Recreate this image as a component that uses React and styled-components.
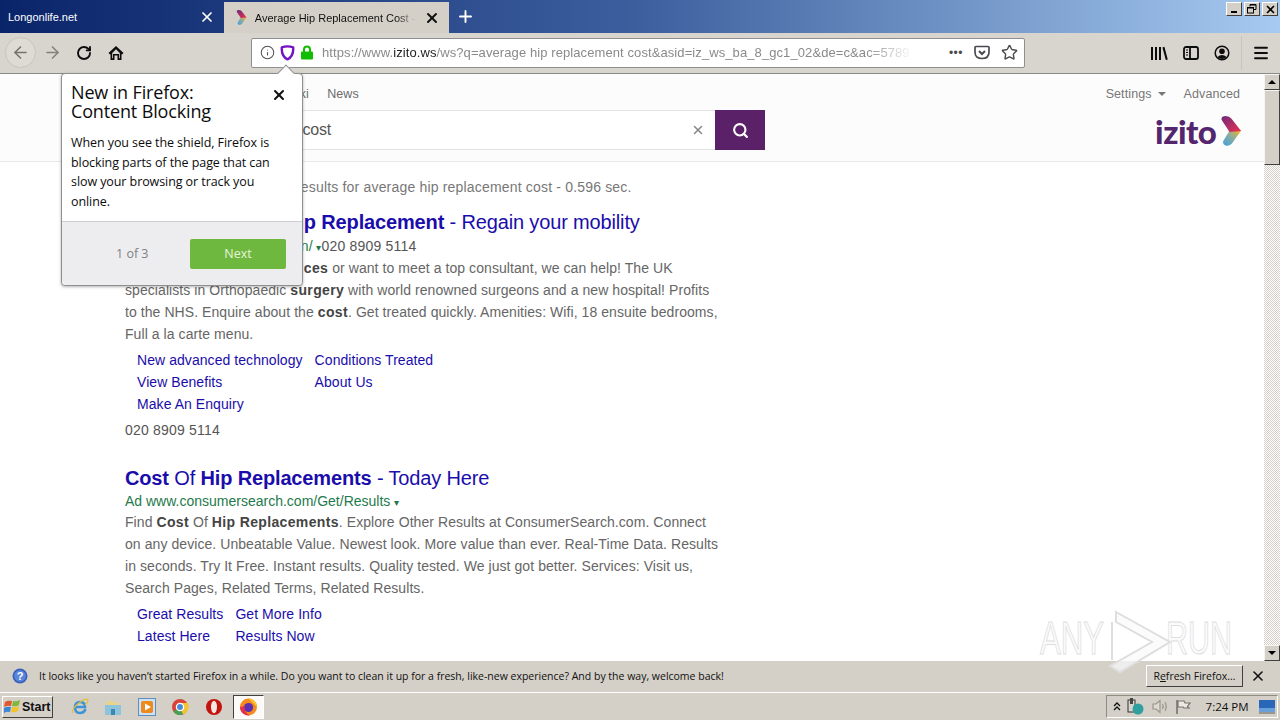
import styled, { createGlobalStyle } from "styled-components";
import { X, Plus, Search, ArrowLeft, ArrowRight, RotateCw, Star, Info, Menu } from "lucide-react";

const GlobalStyle = createGlobalStyle`
  html, body { margin: 0; padding: 0; overflow: hidden; background: #fff; }
  * { box-sizing: border-box; }
`;

const ads = [
  {
    id: 1,
    title: [["Average Cost Of Hi", true], ["p Replacement", true], [" - Regain your mobility", false]],
    url: "Ad www.surreyhospital.com/n/",
    phone: "020 8909 5114",
    lines: [
      [["Best Hip Replacement Prices", true], [" or want to meet a top consultant, we can help! The UK", false]],
      [["specialists in Orthopaedic ", false], ["surgery", true], [" with world renowned surgeons and a new hospital! Profits", false]],
      [["to the NHS. Enquire about the ", false], ["cost", true], [". Get treated quickly. Amenities: Wifi, 18 ensuite bedrooms,", false]],
      [["Full a la carte menu.", false]],
    ],
    links: ["New advanced technology", "Conditions Treated", "View Benefits", "About Us", "Make An Enquiry"],
    footer: "020 8909 5114",
  },
  {
    id: 2,
    tight: true,
    title: [["Cost", true], [" Of ", false], ["Hip Replacements", true], [" - Today Here", false]],
    url: "Ad www.consumersearch.com/Get/Results",
    lines: [
      [["Find ", false], ["Cost", true], [" Of ", false], ["Hip Replacements", true], [". Explore Other Results at ConsumerSearch.com. Connect", false]],
      [["on any device. Unbeatable Value. Newest look. More value than ever. Real-Time Data. Results", false]],
      [["in seconds. Try It Free. Instant results. Quality tested. We just got better. Services: Visit us,", false]],
      [["Search Pages, Related Terms, Related Results.", false]],
    ],
    links: ["Great Results", "Get More Info", "Latest Here", "Results Now"],
  },
];

const ChevronLogo = ({ size = 20, id = "a" }) => (
  <svg width={size * 0.72} height={size} viewBox="0 0 18 25">
    <defs>
      <linearGradient id={id + "t"} x1="0" y1="0" x2="1" y2="1">
        <stop offset="0" stopColor="#6e2a7a" />
        <stop offset="1" stopColor="#ee3050" />
      </linearGradient>
      <linearGradient id={id + "b"} x1="0" y1="1" x2="1" y2="0">
        <stop offset="0" stopColor="#3f9fe0" />
        <stop offset="0.55" stopColor="#8fae9a" />
        <stop offset="1" stopColor="#fbb216" />
      </linearGradient>
    </defs>
    <path d="M8 12 H17.6 L10 23 Q8 25.4 4.6 24.6 Q1.6 23.4 3 20.4 Z" fill={`url(#${id}b)`} />
    <path d="M1.4 3.4 Q.6 .6 3.4 .2 Q7.4 -.4 9.6 2.2 L17.6 12.4 L8 13.4 Z" fill={`url(#${id}t)`} />
  </svg>
);

const App = () => (
  <Screen>
    <GlobalStyle />
    <TitleBar>
      <Tab>
        <span>Longonlife.net</span>
        <X size={16} strokeWidth={2.6} color="#fff" />
      </Tab>
      <ActiveTab>
        <ChevronLogo size={15} id="fav" />
        <ActiveLabel>Average Hip Replacement Cost - Doctors</ActiveLabel>
        <X size={16} strokeWidth={3} color="#111" />
      </ActiveTab>
      <NewTab><Plus size={19} strokeWidth={2.4} color="#fff" /></NewTab>
      <WindowButtons>
        <WinButton>
          <svg width="9" height="9" viewBox="0 0 9 9"><rect x="1" y="6" width="6" height="2" fill="#000" /></svg>
        </WinButton>
        <WinButton>
          <svg width="10" height="10" viewBox="0 0 10 10" fill="none" stroke="#000">
            <path d="M3 2.5V.5h6v5H7" /><rect x=".5" y="3.5" width="6" height="5.5" /><path d="M1 4h5M3 1h6" />
          </svg>
        </WinButton>
        <WinButton>
          <svg width="9" height="9" viewBox="0 0 9 9" stroke="#000" strokeWidth="1.6"><path d="M1 1l7 7M8 1l-7 7" /></svg>
        </WinButton>
      </WindowButtons>
    </TitleBar>

    <NavBar>
      <BackCircle><ArrowLeft size={19} strokeWidth={2} color="#77736c" /></BackCircle>
      <NavIcon><ArrowRight size={19} strokeWidth={2} color="#85817a" /></NavIcon>
      <NavIcon><RotateCw size={16} strokeWidth={2.8} color="#0c0c0d" /></NavIcon>
      <NavIcon>
        <svg width="18" height="18" viewBox="0 0 18 18">
          <path d="M9 2 L1.5 9 L3 10.4 L3.5 10 V16 H7.5 V11.5 H10.5 V16 H14.5 V10 L15 10.4 L16.5 9 Z M5.2 9 L9 5.3 L12.8 9 V14.3 H12 V10 H6 V14.3 H5.2 Z" fill="#0c0c0d" fillRule="evenodd" />
        </svg>
      </NavIcon>
      <UrlBar>
        <Info size={15} strokeWidth={1.7} color="#55524e" />
        <svg width="15" height="16" viewBox="0 0 15 16">
          <path d="M1.8 2.4 Q7.5 .4 13.2 2.4 Q13.8 11 7.5 14.4 Q1.2 11 1.8 2.4 Z" fill="none" stroke="#7512c4" strokeWidth="2.4" strokeLinejoin="round" />
        </svg>
        <svg width="14" height="15" viewBox="0 0 14 15">
          <path d="M4 7V4.6Q4 1.6 7 1.6Q10 1.6 10 4.6V7" fill="none" stroke="#12bc00" strokeWidth="2" />
          <rect x="1" y="6.5" width="12" height="8" rx="1" fill="#12bc00" />
        </svg>
        <UrlText>https://www.<strong>izito.ws</strong>/ws?q=average hip replacement cost&amp;asid=iz_ws_ba_8_gc1_02&amp;de=c&amp;ac=5789</UrlText>
        <UrlActions>
          <MoreDots>•••</MoreDots>
          <svg width="16" height="15" viewBox="0 0 16 15" fill="none" stroke="#4a4a4f" strokeWidth="1.7">
            <path d="M2 1.5H14Q15 1.5 15 2.5V7Q15 13.5 8 13.5Q1 13.5 1 7V2.5Q1 1.5 2 1.5Z" />
            <path d="M5 6l3 3 3-3" strokeWidth="2" />
          </svg>
          <Star size={17} strokeWidth={2} color="#4a4a4f" />
        </UrlActions>
      </UrlBar>
      <RightTools>
        <svg width="18" height="16" viewBox="0 0 18 16" fill="#0c0c0d">
          <rect x="1" y="2" width="2" height="13" /><rect x="5" y="2" width="2" height="13" /><rect x="9" y="2" width="2" height="13" />
          <path d="M12.4 2.4l2-.6 3.4 12.6-2 .6z" />
        </svg>
        <svg width="16" height="14" viewBox="0 0 16 14" fill="none" stroke="#0c0c0d" strokeWidth="1.8">
          <rect x="1" y="1" width="14" height="12" rx="2" />
          <path d="M7 1v12" />
          <path d="M3 4h2M3 6.5h2M3 9h2" strokeWidth="1" />
        </svg>
        <svg width="16" height="16" viewBox="0 0 16 16">
          <circle cx="8" cy="8" r="6.8" fill="none" stroke="#0c0c0d" strokeWidth="1.5" />
          <circle cx="8" cy="6.2" r="2.8" fill="#0c0c0d" />
          <path d="M3.2 12.2Q8 7.6 12.8 12.2Q8 15.6 3.2 12.2Z" fill="#0c0c0d" />
        </svg>
        <ToolDivider />
        <Menu size={18} strokeWidth={2.4} color="#0c0c0d" />
      </RightTools>
    </NavBar>

    <Viewport>
      <Page>
        <Header>
          <HeaderMain>
            <Tabs>
              <TabLink>Web</TabLink>
              <TabLink>Images</TabLink>
              <TabLink>Videos</TabLink>
              <TabLink>Wiki</TabLink>
              <TabLink>News</TabLink>
            </Tabs>
            <SearchRow>
              <SearchField>
                <SearchText>average hip replacement cost</SearchText>
                <X size={14} strokeWidth={2.6} color="#8a8a8a" />
              </SearchField>
              <SearchButton><Search size={17} strokeWidth={3} color="#fff" /></SearchButton>
            </SearchRow>
          </HeaderMain>
          <HeaderSide>
            <SideLinks>
              <SideLink>Settings <Caret /></SideLink>
              <SideLink>Advanced</SideLink>
            </SideLinks>
            <Logo>izito <ChevronLogo size={30} id="logo" /></Logo>
          </HeaderSide>
        </Header>
        <Results>
          <Stats>Viewing 1-10 of 1,270,000 results for average hip replacement cost - 0.596 sec.</Stats>
          {ads.map((ad) => (
            <Ad key={ad.id}>
              <AdTitle>
                {ad.title.map(([text, bold], i) => (bold ? <b key={i}>{text}</b> : <span key={i}>{text}</span>))}
              </AdTitle>
              <AdUrl $tight={ad.tight}>
                {ad.url} <Arrow>▾</Arrow>
                {ad.phone && <Phone>{ad.phone}</Phone>}
              </AdUrl>
              {ad.lines.map((line, i) => (
                <AdLine key={i}>
                  {line.map(([text, bold], j) => (bold ? <b key={j}>{text}</b> : <span key={j}>{text}</span>))}
                </AdLine>
              ))}
              <SiteLinks>
                {ad.links.map((l) => <SiteLink key={l}>{l}</SiteLink>)}
              </SiteLinks>
              {ad.footer && <AdFooter>{ad.footer}</AdFooter>}
            </Ad>
          ))}
        </Results>
      </Page>

      <Scrollbar>
        <ScrollButton><UpTri /></ScrollButton>
        <ScrollThumb />
        <ScrollTrack />
        <ScrollButton><DownTri /></ScrollButton>
      </Scrollbar>

      <Popup>
        <PopupArrow />
        <PopupBody>
          <PopupHead>
            <PopupTitle>New in Firefox:<br />Content Blocking</PopupTitle>
            <X size={16} strokeWidth={3} color="#111" />
          </PopupHead>
          <PopupText>When you see the shield, Firefox is blocking parts of the page that can slow your browsing or track you online.</PopupText>
        </PopupBody>
        <PopupFoot>
          <PopupStep>1 of 3</PopupStep>
          <NextButton>Next</NextButton>
        </PopupFoot>
      </Popup>

      <Watermark width="196" height="64" viewBox="0 0 196 64">
        <g fontFamily="Liberation Sans" fontSize="46" fill="rgba(250,250,250,.7)" stroke="#dedede">
          <text x="2" y="44" textLength="64" lengthAdjust="spacingAndGlyphs">ANY</text>
          <text x="128" y="44" textLength="66" lengthAdjust="spacingAndGlyphs">RUN</text>
        </g>
        <path d="M78 2 L132 32 L82 62 L72 56 L114 32 L78 12 Z" fill="rgba(250,250,250,.7)" stroke="#dedede" strokeWidth="2" />
        <path d="M74 12 V50" fill="none" stroke="#dedede" strokeWidth="2" />
      </Watermark>
    </Viewport>

    <Notice>
      <svg width="16" height="16" viewBox="0 0 16 16">
        <circle cx="8" cy="8" r="7.5" fill="#3a62b8" />
        <circle cx="8" cy="8" r="5.8" fill="#5c86dc" />
        <text x="8" y="12" textAnchor="middle" fontSize="11" fontWeight="700" fontFamily="Liberation Sans" fill="#fff">?</text>
      </svg>
      <NoticeText>It looks like you haven’t started Firefox in a while. Do you want to clean it up for a fresh, like-new experience? And by the way, welcome back!</NoticeText>
      <RefreshButton>R<u>e</u>fresh Firefox…</RefreshButton>
      <X size={16} strokeWidth={2.4} color="#111" />
    </Notice>

    <Taskbar>
      <StartButton>
        <svg width="17" height="15" viewBox="0 0 17 15">
          <path d="M1 3Q4 1 8 2L7 7Q4 6 0 8Z" fill="#e2572b" />
          <path d="M9 2Q12 3 16 1L15 6Q12 8 8 7Z" fill="#7fb83a" />
          <path d="M0 9Q3 7 7 8L6 13Q3 12 0 14Z" fill="#3b86d6" />
          <path d="M8 8Q11 9 15 7L14 12Q11 14 7 13Z" fill="#f0c22c" />
        </svg>
        Start
      </StartButton>
      <TaskIcons>
        <TaskSlot>
          <svg width="18" height="18" viewBox="0 0 18 18" fill="none">
            <path d="M14.5 11Q13 15 9 15Q4 15 4 9.5Q4 4 9 4Q14 4 14 9H5" stroke="#3d94d6" strokeWidth="2.6" />
            <path d="M2 15Q0 11 8 5Q14 0 16.5 1.5Q18 4 14 7" stroke="#e3bd3a" strokeWidth="1.3" />
          </svg>
        </TaskSlot>
        <TaskSlot>
          <svg width="18" height="18" viewBox="0 0 18 18">
            <path d="M2 3H9L11 5H16V8H2Z" fill="#e8d48c" />
            <rect x="1" y="7" width="16" height="10" fill="#8ec3dc" />
            <rect x="7" y="11" width="4" height="6" fill="#3f86b0" />
          </svg>
        </TaskSlot>
        <TaskSlot>
          <svg width="18" height="18" viewBox="0 0 18 18">
            <rect x=".5" y=".5" width="17" height="17" fill="#cfe0f2" stroke="#5b8fc0" />
            <rect x="3" y="3" width="12" height="12" rx="2" fill="#ee8a1c" />
            <path d="M7 5.5L13 9L7 12.5Z" fill="#fff" />
          </svg>
        </TaskSlot>
        <TaskSlot>
          <svg width="18" height="18" viewBox="0 0 18 18">
            <circle cx="9" cy="9" r="8" fill="#d8433a" />
            <path d="M9 9L2.4 13.5A8 8 0 0 0 12 16.4Z" fill="#46a152" />
            <path d="M9 9L12 16.4A8 8 0 0 0 16.8 5H9Z" fill="#f1c534" />
            <circle cx="9" cy="9" r="3.6" fill="#4a88d8" stroke="#fff" strokeWidth="1.3" />
          </svg>
        </TaskSlot>
        <TaskSlot>
          <svg width="18" height="18" viewBox="0 0 18 18">
            <circle cx="9" cy="9" r="8" fill="#c4130f" />
            <ellipse cx="9" cy="9" rx="3" ry="6.2" fill="#f4e8e2" />
          </svg>
        </TaskSlot>
        <ActiveSlot>
          <svg width="19" height="19" viewBox="0 0 19 19">
            <circle cx="9.5" cy="10" r="8.5" fill="#f68a1e" />
            <path d="M9.5 1.5A8.5 8.5 0 0 1 18 10L14 6Z" fill="#fcc52c" />
            <circle cx="9.5" cy="10.5" r="4.6" fill="#5b2fb0" />
            <path d="M1 10A8.5 8.5 0 0 0 11 18.4Q5 16 5.5 9Z" fill="#e5304a" />
          </svg>
        </ActiveSlot>
      </TaskIcons>
      <Tray>
        <svg width="8" height="9" viewBox="0 0 8 9" fill="none" stroke="#111" strokeWidth="1.3"><path d="M1 4l3-3 3 3M1 8l3-3 3 3" /></svg>
        <svg width="18" height="17" viewBox="0 0 18 17">
          <rect x="1" y="2" width="7" height="12" fill="#d8d4cc" stroke="#333" />
          <rect x="3" y="0" width="3" height="6" fill="#444" />
          <circle cx="11" cy="11" r="5.5" fill="#2f9f9f" />
        </svg>
        <svg width="17" height="15" viewBox="0 0 17 15" fill="none" stroke="#9a968e" strokeWidth="1.2">
          <path d="M1 5H4L8 1.5V13.5L4 10H1Z" fill="#dedad2" />
          <path d="M10.5 5Q12 7.5 10.5 10M13 3Q15.4 7.5 13 12" />
        </svg>
        <svg width="16" height="16" viewBox="0 0 16 16" fill="none" stroke="#77736c" strokeWidth="1.2">
          <path d="M2 1V15" strokeWidth="1.6" />
          <path d="M3 2H9L10 4H15L12.5 7.5L14 9H9L8 8H3Z" fill="#ece9e2" />
        </svg>
        <Clock>7:24 PM</Clock>
        <svg width="16" height="14" viewBox="0 0 16 14">
          <rect width="16" height="12" fill="#2a67b8" />
          <rect y="8" width="16" height="4" fill="#6aa0da" />
          <rect y="12" width="16" height="2" fill="#9a968e" />
        </svg>
      </Tray>
    </Taskbar>
  </Screen>
);

export default App;

const Screen = styled.div`
  width: 1280px;
  height: 720px;
  display: flex;
  flex-direction: column;
  overflow: hidden;
  font-family: "Liberation Sans", Arial, sans-serif;
  background: #d4d0c8;
`;

const TitleBar = styled.div`
  height: 33px;
  flex: none;
  display: flex;
  align-items: stretch;
  background: linear-gradient(90deg, #0a246a 0%, #3d5f9e 50%, #a6caf0 100%);
`;

const Tab = styled.div`
  width: 224px;
  display: flex;
  align-items: center;
  justify-content: space-between;
  padding: 0 9px 0 8px;
  color: #fff;
  font-size: 11px;
`;

const ActiveTab = styled.div`
  width: 225px;
  margin-top: 2px;
  display: flex;
  align-items: center;
  gap: 8px;
  padding: 0 9px 0 12px;
  background: #d4d0c8;
  color: #111;
  font-size: 11px;
  white-space: nowrap;
  overflow: hidden;
`;

const ActiveLabel = styled.span`
  flex: 1;
  overflow: hidden;
  -webkit-mask-image: linear-gradient(90deg, #000 88%, transparent);
  mask-image: linear-gradient(90deg, #000 88%, transparent);
`;

const NewTab = styled.div`
  width: 32px;
  display: flex;
  align-items: center;
  justify-content: center;
`;

const WindowButtons = styled.div`
  margin-left: auto;
  display: flex;
  gap: 2px;
  padding: 2px 2px 0 0;
`;

const WinButton = styled.div`
  width: 16px;
  height: 14px;
  display: flex;
  align-items: center;
  justify-content: center;
  background: #d4d0c8;
  border: 1px solid;
  border-color: #fff #404040 #404040 #fff;
`;

const NavBar = styled.div`
  height: 41px;
  flex: none;
  display: flex;
  align-items: center;
  padding: 0 0 1px 5px;
  background: #d8d5cf;
  border-bottom: 1px solid #8a8a86;
`;

const BackCircle = styled.div`
  width: 31px;
  height: 31px;
  border-radius: 50%;
  display: flex;
  align-items: center;
  justify-content: center;
  background: #dedbd5;
  border: 1px solid #c8c5bf;
`;

const NavIcon = styled.div`
  width: 32px;
  height: 32px;
  display: flex;
  align-items: center;
  justify-content: center;
`;

const UrlBar = styled.div`
  width: 774px;
  height: 30px;
  margin-left: 119px;
  display: flex;
  align-items: center;
  gap: 5px;
  padding: 0 6px 0 8px;
  background: #fff;
  border: 1px solid #8f8f8f;
  border-radius: 2px;
  flex: none;
`;

const UrlText = styled.div`
  flex: 1;
  min-width: 0;
  margin-left: 3px;
  font-size: 13px;
  letter-spacing: 0.09px;
  color: #8a8a8a;
  white-space: nowrap;
  overflow: hidden;
  -webkit-mask-image: linear-gradient(90deg, #000 92%, transparent);
  mask-image: linear-gradient(90deg, #000 92%, transparent);
  strong {
    font-weight: 400;
    color: #222;
  }
`;

const UrlActions = styled.div`
  display: flex;
  align-items: center;
  gap: 11px;
  margin-left: 31px;
`;

const MoreDots = styled.span`
  font-size: 12px;
  letter-spacing: 0.5px;
  color: #4a4a4f;
`;

const RightTools = styled.div`
  flex: 1;
  display: flex;
  align-items: center;
  justify-content: flex-end;
  gap: 15px;
  padding-right: 10px;
`;

const ToolDivider = styled.div`
  width: 1px;
  height: 34px;
  margin: 0 -5px 0 -4px;
  background: #c8c5bf;
`;

const Viewport = styled.div`
  position: relative;
  flex: 1;
  min-height: 0;
  display: flex;
  background: #fff;
`;

const Page = styled.div`
  flex: 1;
  overflow: hidden;
`;

const Header = styled.div`
  height: 88px;
  display: flex;
  justify-content: space-between;
  padding: 0 22px 0 125px;
  background: #fcfcfc;
  border-bottom: 1px solid #e8e8e8;
`;

const HeaderMain = styled.div`
  width: 640px;
`;

const Tabs = styled.div`
  height: 36px;
  display: flex;
  align-items: flex-end;
  gap: 18.3px;
  padding: 0 0 9px 0;
`;

const TabLink = styled.span`
  font-size: 12.5px;
  letter-spacing: 0.05px;
  color: #6b6b6b;
`;

const SearchRow = styled.div`
  display: flex;
  height: 40px;
`;

const SearchField = styled.div`
  flex: 1;
  display: flex;
  align-items: center;
  justify-content: space-between;
  padding-right: 10px;
  background: #fff;
  border: 1px solid #e2e2e2;
  border-width: 1px 0;
`;

const SearchText = styled.span`
  font-size: 16px;
  letter-spacing: -0.25px;
  color: #555;
  padding-left: 3px;
`;

const SearchButton = styled.div`
  width: 50px;
  display: flex;
  align-items: center;
  justify-content: center;
  background: #5a2068;
`;

const HeaderSide = styled.div`
  display: flex;
  flex-direction: column;
  align-items: flex-end;
`;

const SideLinks = styled.div`
  height: 36px;
  display: flex;
  align-items: flex-end;
  gap: 18px;
  padding: 0 2px 9px 0;
`;

const SideLink = styled.span`
  display: flex;
  align-items: center;
  gap: 6px;
  font-size: 12.5px;
  letter-spacing: 0.1px;
  color: #777;
`;

const Caret = styled.i`
  width: 0;
  height: 0;
  border: 4px solid transparent;
  border-top-color: #777;
  border-bottom: 0;
`;

const Logo = styled.div`
  display: flex;
  align-items: center;
  gap: 4px;
  height: 42px;
  font-family: Lato, sans-serif;
  font-weight: 900;
  font-size: 33px;
  letter-spacing: -0.5px;
  color: #54266e;
`;

const Results = styled.div`
  padding: 17px 0 0 125px;
`;

const Stats = styled.div`
  height: 30px;
  line-height: 16px;
  font-size: 14px;
  letter-spacing: 0.18px;
  color: #777;
`;

const Ad = styled.div`
  margin-bottom: 24px;
`;

const AdTitle = styled.div`
  line-height: 26px;
  font-size: 20px;
  letter-spacing: -0.15px;
  color: #1a0dab;
  white-space: nowrap;
`;

const AdUrl = styled.div`
  height: ${(p) => (p.$tight ? "21px" : "22px")};
  margin-top: ${(p) => (p.$tight ? "-1px" : "0")};
  line-height: 22px;
  font-size: 14px;
  color: #1e7a4c;
  white-space: nowrap;
`;

const Arrow = styled.span`
  font-size: 10px;
`;

const Phone = styled.span`
  font-size: 14px;
  letter-spacing: 0.2px;
  color: #555;
`;

const AdLine = styled.div`
  height: 22px;
  line-height: 22px;
  font-size: 14px;
  letter-spacing: 0.07px;
  color: #666;
  white-space: nowrap;
  b {
    color: #444;
    letter-spacing: 0.35px;
  }
`;

const SiteLinks = styled.div`
  display: grid;
  grid-template-columns: max-content max-content;
  column-gap: 12px;
  margin: 4px 0 0 12px;
`;

const SiteLink = styled.span`
  height: 22px;
  line-height: 22px;
  font-size: 14px;
  letter-spacing: 0.06px;
  color: #1a0dab;
`;

const AdFooter = styled.div`
  margin-top: 4px;
  height: 22px;
  line-height: 22px;
  font-size: 14px;
  letter-spacing: 0.2px;
  color: #555;
`;

const Scrollbar = styled.div`
  width: 16px;
  flex: none;
  display: flex;
  flex-direction: column;
`;

const ScrollButton = styled.div`
  width: 16px;
  height: 16px;
  display: flex;
  align-items: center;
  justify-content: center;
  background: #d4d0c8;
  border: 1px solid;
  border-color: #f4f4f0 #404040 #404040 #f4f4f0;
`;

const UpTri = styled.i`
  border: 4px solid transparent;
  border-bottom-color: #000;
  border-top: 0;
`;

const DownTri = styled.i`
  border: 4px solid transparent;
  border-top-color: #000;
  border-bottom: 0;
`;

const ScrollThumb = styled.div`
  height: 75px;
  flex: none;
  background: #d4d0c8;
  border: 1px solid;
  border-color: #f4f4f0 #404040 #404040 #f4f4f0;
`;

const ScrollTrack = styled.div`
  flex: 1;
  background: repeating-conic-gradient(#d4d0c8 0 25%, #fff 0 50%) 0 0 / 2px 2px;
`;

const Popup = styled.div`
  position: absolute;
  left: 61px;
  top: -1px;
  width: 242px;
  height: 213px;
  display: flex;
  flex-direction: column;
  background: #fff;
  border: 1px solid #8f8f8f;
  border-radius: 4px;
  box-shadow: 0 1px 3px rgba(0, 0, 0, 0.3);
`;

const PopupArrow = styled.div`
  position: absolute;
  left: 218px;
  top: -7px;
  width: 12px;
  height: 12px;
  background: #fff;
  border: 1px solid #8f8f8f;
  border-width: 1px 0 0 1px;
  transform: rotate(45deg);
`;

const PopupBody = styled.div`
  flex: 1;
  padding: 9px 15px 0 9px;
  color: #0c0c0d;
`;

const PopupHead = styled.div`
  display: flex;
  justify-content: space-between;
  align-items: flex-start;
  svg {
    margin-top: 4px;
  }
`;

const PopupTitle = styled.div`
  font-family: "Open Sans", sans-serif;
  font-size: 18px;
  line-height: 19px;
  letter-spacing: -0.15px;
  color: #0c0c0d;
`;

const PopupText = styled.div`
  margin-top: 12px;
  font-family: "Open Sans", sans-serif;
  font-size: 12.5px;
  line-height: 19.7px;
  letter-spacing: -0.08px;
  color: #0c0c0d;
`;

const PopupFoot = styled.div`
  height: 64px;
  flex: none;
  display: flex;
  align-items: center;
  justify-content: space-between;
  padding: 0 16px 0 54px;
  background: #ededf0;
  border-top: 1px solid #cfcfd2;
  border-radius: 0 0 4px 4px;
`;

const PopupStep = styled.span`
  font-family: "Open Sans", sans-serif;
  font-size: 12.5px;
  color: #808080;
`;

const NextButton = styled.div`
  width: 96px;
  height: 30px;
  display: flex;
  align-items: center;
  justify-content: center;
  font-family: "Open Sans", sans-serif;
  font-size: 12.5px;
  color: #e6f4d8;
  background: #6fb840;
  border-radius: 2px;
`;

const Watermark = styled.svg`
  position: absolute;
  left: 1038px;
  top: 536px;
`;

const Notice = styled.div`
  height: 32px;
  flex: none;
  display: flex;
  align-items: center;
  padding: 0 14px 2px 12px;
  background: #d4d0c8;
  border-bottom: 1px solid #fff;
`;

const NoticeText = styled.span`
  flex: 1;
  margin-left: 11px;
  font-family: "Open Sans", sans-serif;
  font-size: 10.5px;
  color: #111;
`;

const RefreshButton = styled.div`
  width: 97px;
  height: 22px;
  margin-right: 7px;
  display: flex;
  align-items: center;
  justify-content: center;
  font-family: "Open Sans", sans-serif;
  font-size: 10.5px;
  color: #111;
  background: #d4d0c8;
  border: 1px solid;
  border-color: #fff #404040 #404040 #fff;
`;

const Taskbar = styled.div`
  height: 27px;
  flex: none;
  display: flex;
  align-items: center;
  padding: 0 2px;
  background: #d4d0c8;
`;

const StartButton = styled.div`
  width: 51px;
  height: 22px;
  display: flex;
  align-items: center;
  gap: 1px;
  padding-left: 1px;
  font-family: "Liberation Sans", sans-serif;
  font-weight: 700;
  font-size: 12.5px;
  color: #111;
  background: #d4d0c8;
  border: 1px solid;
  border-color: #fff #404040 #404040 #fff;
`;

const TaskIcons = styled.div`
  display: flex;
  align-items: center;
  margin-left: 10px;
`;

const TaskSlot = styled.div`
  width: 33.5px;
  display: flex;
  justify-content: center;
`;

const ActiveSlot = styled.div`
  width: 31px;
  height: 24px;
  margin-left: 2px;
  display: flex;
  align-items: center;
  justify-content: center;
  background: #fbfaf8;
  border: 1px solid;
  border-color: #404040 #fff #fff #404040;
`;

const Tray = styled.div`
  margin-left: auto;
  width: 172px;
  height: 23px;
  display: flex;
  align-items: center;
  justify-content: space-between;
  padding: 0 2px 0 6px;
  border: 1px solid;
  border-color: #8f8c86 #fff #fff #8f8c86;
`;

const Clock = styled.span`
  margin-left: 8px;
  margin-right: 4px;
  font-family: "Open Sans", sans-serif;
  font-size: 11.5px;
  color: #111;
`;
